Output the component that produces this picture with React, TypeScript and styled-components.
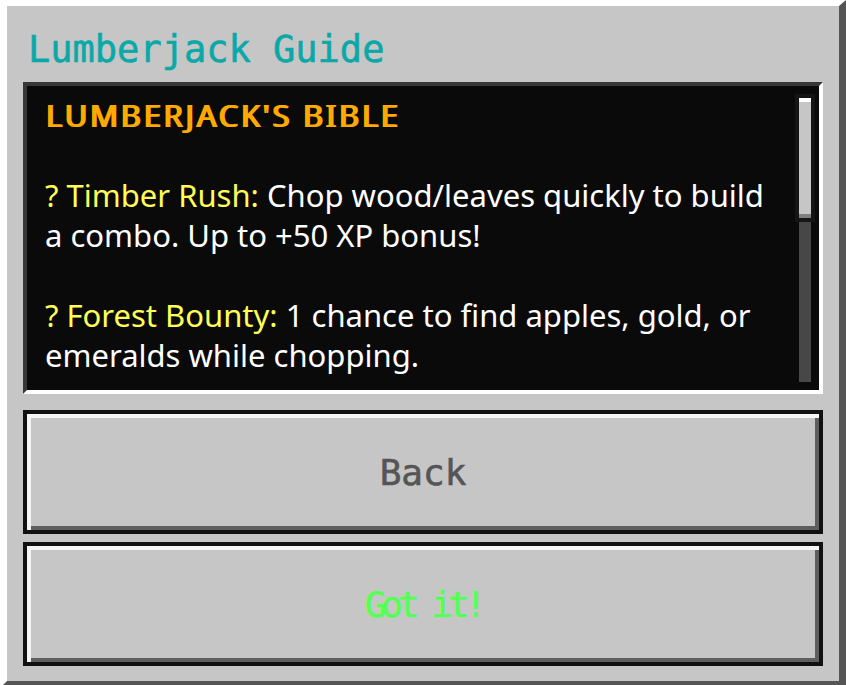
import React from 'react';
import styled, { createGlobalStyle } from 'styled-components';

const GlobalStyle = createGlobalStyle`
  html, body {
    margin: 0;
    padding: 0;
    overflow: hidden;
    background: #ffffff;
  }
`;

const Panel = styled.div`
  box-sizing: border-box;
  width: 846px;
  height: 688px;
  display: flex;
  flex-direction: column;
  padding: 16px 16px 15px;
  background: #c6c6c6;
  border-top: 6px solid #ffffff;
  border-left: 7px solid #ffffff;
  border-right: 7px solid #555555;
  border-bottom: 7px solid #555555;
`;

const Title = styled.div`
  font-family: 'DejaVu Sans Mono', 'Liberation Mono', monospace;
  font-size: 37px;
  line-height: 56px;
  height: 56px;
  margin-bottom: 4px;
  padding-left: 5px;
  color: #0aa8a8;
  -webkit-text-stroke: 0.6px #0aa8a8;
  white-space: nowrap;
`;

const TextBox = styled.div`
  box-sizing: border-box;
  height: 312px;
  display: flex;
  background: #0a0a0a;
  border-top: 4px solid #373737;
  border-left: 4px solid #373737;
  border-right: 4px solid #ffffff;
  border-bottom: 4px solid #ffffff;
  overflow: hidden;
`;

const TextColumn = styled.div`
  flex: 1;
  padding: 9px 16px 0 18px;
  overflow: hidden;
  font-family: 'Noto Sans', 'Open Sans', sans-serif;
  font-size: 31px;
  line-height: 40px;
  color: #ffffff;
`;

const Heading = styled.div`
  font-weight: 400;
  color: #ffaa00;
  letter-spacing: 2.7px;
  text-shadow: 2px 0 0 #ffaa00;
  margin-bottom: 40px;
`;

const Entry = styled.p`
  margin: 0 0 40px;
`;

const Label = styled.span`
  color: #ffff55;
`;

const ScrollBar = styled.div`
  width: 20px;
  margin: 8px 4px 8px 0;
  display: flex;
  flex-direction: column;
  align-items: center;
`;

const Thumb = styled.div`
  width: 12px;
  height: 120px;
  border: 4px solid #151515;
  background: #c6c6c6;
  box-shadow: inset 0 4px 0 #ffffff, inset 0 -4px 0 #808080;
`;

const Track = styled.div`
  flex: 1;
  width: 12px;
  background: #474747;
`;

const Button = styled.button<{ $color: string; $first?: boolean; $tight?: boolean }>`
  box-sizing: border-box;
  height: 124px;
  width: 100%;
  margin-top: ${({ $first }) => ($first ? '16px' : '8px')};
  padding: 0;
  display: flex;
  align-items: center;
  justify-content: center;
  background: #c6c6c6;
  border: 4px solid #111111;
  box-shadow: inset 4px 4px 0 #f5f5f5, inset -4px -4px 0 #5e5e5e;
  font-family: 'DejaVu Sans Mono', 'Liberation Mono', monospace;
  font-size: 36px;
  letter-spacing: ${({ $tight }) => ($tight ? '-5px' : '0')};
  color: ${({ $color }) => $color};
  -webkit-text-stroke: 0.6px ${({ $color }) => $color};
  cursor: pointer;
`;

export default function App() {
  return (
    <>
      <GlobalStyle />
      <Panel>
        <Title>Lumberjack Guide</Title>
        <TextBox>
          <TextColumn>
            <Heading>LUMBERJACK'S BIBLE</Heading>
            <Entry>
              <Label>? Timber Rush:</Label> Chop wood/leaves quickly to build a
              combo. Up to +50 XP bonus!
            </Entry>
            <Entry>
              <Label>? Forest Bounty:</Label> 1 chance to find apples, gold, or
              emeralds while chopping.
            </Entry>
          </TextColumn>
          <ScrollBar>
            <Thumb />
            <Track />
          </ScrollBar>
        </TextBox>
        <Button $color="#555555" $first>
          Back
        </Button>
        <Button $color="#55ff55" $tight>
          Got it!
        </Button>
      </Panel>
    </>
  );
}
